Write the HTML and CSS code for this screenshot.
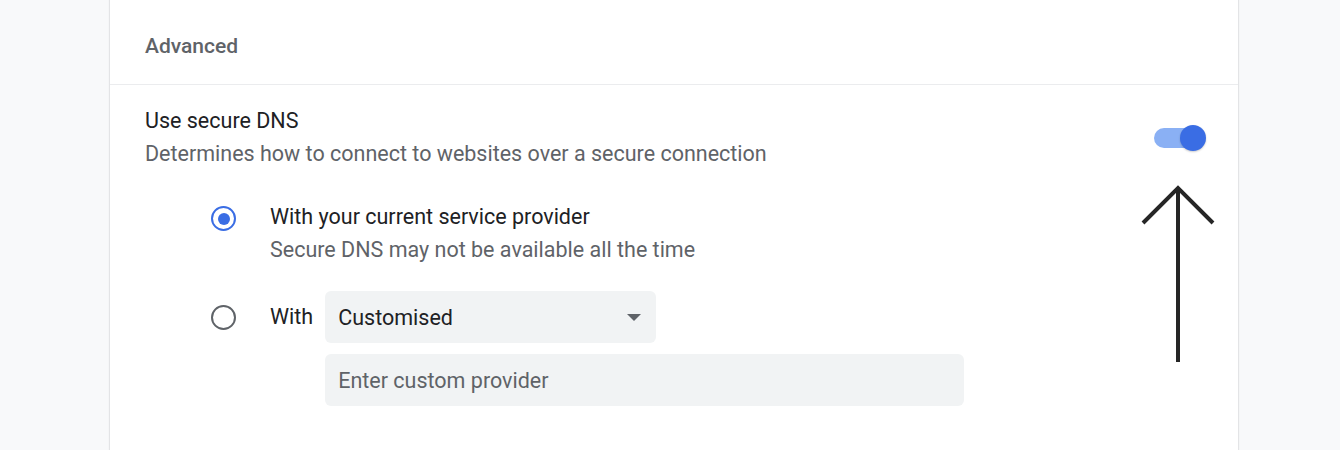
FILE: index.html
```html
<!DOCTYPE html>
<html>
<head>
<meta charset="utf-8">
<link rel="stylesheet" href="styles.css">
</head>
<body>
<div class="page">
  <div class="card">
    <div class="header">Advanced</div>
    <div class="row">
      <div class="row-text">
        <div class="primary">Use secure DNS</div>
        <div class="secondary">Determines how to connect to websites over a secure connection</div>
      </div>
      <div class="toggle-col">
        <div class="toggle"><div class="knob"></div></div>
        <svg class="arrow" width="80" height="180" viewBox="0 0 80 180">
          <path d="M39 4 V178 M4 39 L39 4 L74 39" fill="none" stroke="#262626" stroke-width="4"/>
        </svg>
      </div>
    </div>
    <div class="options">
      <div class="option">
        <div class="radio checked"><div class="dot"></div></div>
        <div class="opt-text">
          <div class="primary">With your current service provider</div>
          <div class="secondary">Secure DNS may not be available all the time</div>
        </div>
      </div>
      <div class="option custom">
        <div class="radio"></div>
        <div class="with">With</div>
        <div class="custom-fields">
          <div class="select">
            <span>Customised</span>
            <span class="caret"></span>
          </div>
          <div class="input">Enter custom provider</div>
        </div>
      </div>
    </div>
  </div>
</div>
</body>
</html>
```
FILE: styles.css
```css
html, body {
  margin: 0;
  padding: 0;
  background: #f8f9fa;
  font-family: Roboto, "Liberation Sans", Arial, sans-serif;
  font-size: 21.5px;
  color: #202124;
}
.page {
  width: 1340px;
  height: 450px;
  overflow: hidden;
}
.card {
  margin-left: 110px;
  width: 1128px;
  height: 470px;
  background: #ffffff;
  box-shadow: 0 0 1px 1px #e3e4e6;
}
.header {
  height: 85px;
  box-sizing: border-box;
  padding: 32px 0 0 35px;
  font-weight: 500;
  color: #5f6368;
  border-bottom: 1px solid #ebecee;
  line-height: 28px;
  font-size: 21px;
}
.row {
  display: flex;
  justify-content: space-between;
  padding: 22px 0 0 35px;
  height: 76px;
  box-sizing: border-box;
}
.primary {
  line-height: 28px;
  color: #202124;
}
.secondary {
  line-height: 28px;
  color: #5f6368;
  margin-top: 5px;
}
.toggle-col {
  width: 93px;
  position: relative;
  display: flex;
  flex-direction: column;
  align-items: flex-start;
}
.toggle {
  margin-top: 21px;
  margin-left: 9px;
  width: 48px;
  height: 20px;
  border-radius: 10px;
  background: #8ab0f4;
  position: relative;
}
.knob {
  position: absolute;
  right: -4px;
  top: -3px;
  width: 26px;
  height: 26px;
  border-radius: 50%;
  background: #3a6de4;
  box-shadow: 0 1px 2px rgba(0,0,0,0.2);
}
.arrow {
  position: absolute;
  left: -6px;
  top: 77px;
}
.options {
  padding-left: 101px;
  padding-top: 42px;
}
.option {
  display: flex;
  align-items: flex-start;
}
.radio {
  width: 25px;
  height: 25px;
  border: 2.5px solid #5f6368;
  border-radius: 50%;
  box-sizing: border-box;
  display: flex;
  align-items: center;
  justify-content: center;
  margin-top: 3px;
  flex: none;
}
.radio.checked {
  border-color: #3a6de4;
}
.dot {
  width: 12px;
  height: 12px;
  border-radius: 50%;
  background: #3a6de4;
}
.opt-text {
  margin-left: 34px;
}
.option.custom {
  margin-top: 27px;
}
.option.custom .radio {
  margin-top: 14px;
}
.with {
  margin-left: 34px;
  line-height: 28px;
  margin-top: 12px;
  color: #202124;
}
.custom-fields {
  margin-left: 12px;
  display: flex;
  flex-direction: column;
  gap: 11px;
}
.select {
  width: 331px;
  height: 52px;
  box-sizing: border-box;
  background: #f1f3f4;
  border-radius: 6px;
  display: flex;
  align-items: center;
  justify-content: space-between;
  padding: 0 15px 0 13px;
  color: #202124;
}
.caret {
  width: 0;
  height: 0;
  border-left: 7px solid transparent;
  border-right: 7px solid transparent;
  border-top: 7px solid #5f6368;
}
.input {
  width: 639px;
  height: 52px;
  box-sizing: border-box;
  background: #f1f3f4;
  border-radius: 6px;
  display: flex;
  align-items: center;
  padding-left: 13px;
  color: #5f6368;
}
```
